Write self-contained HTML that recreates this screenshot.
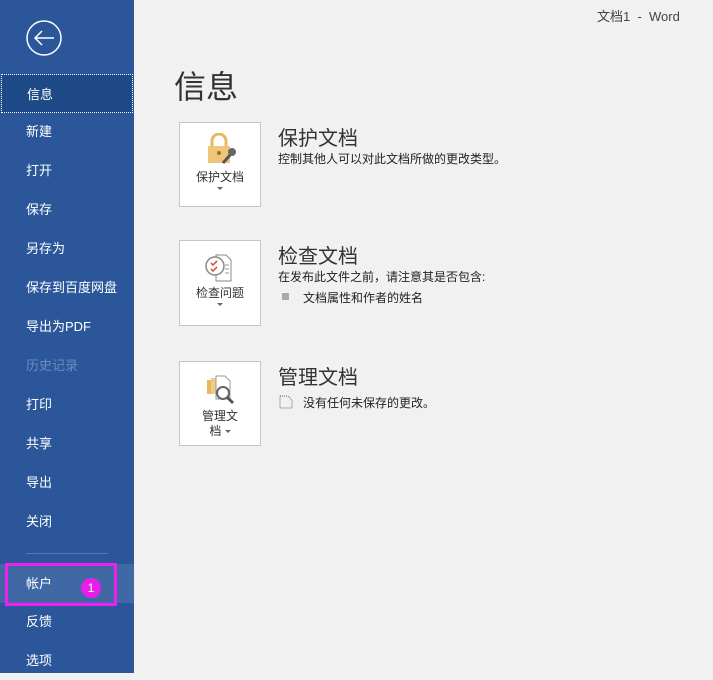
<!DOCTYPE html>
<html><head><meta charset="utf-8"><style>
*{margin:0;padding:0;box-sizing:border-box}
body{width:713px;height:673px;overflow:hidden;background:#f1f1f1;font-family:"Liberation Sans","Noto Sans CJK SC",sans-serif;position:relative}
#side{position:absolute;left:0;top:0;width:134px;height:673px;background:#2b579a}
.mi{position:absolute;left:0;width:134px;height:39px;line-height:39px;padding-left:26px;color:#fff;font-size:13px}
.sel{background:#1d4a86;border:1px dotted #fff;left:1px;width:132px;padding-left:25px}
.dis{color:#6d8cbd}
.btn{position:absolute;left:179px;width:82px;background:#fff;border:1px solid #c6c6c6;text-align:center;font-size:12px;color:#333}
.h{position:absolute;left:278px;font-size:20px;color:#333}
.d{position:absolute;left:278px;font-size:12px;color:#222}
.ar{display:block;width:0;height:0;margin:2px auto;border-left:3px solid transparent;border-right:3px solid transparent;border-top:3px solid #666}
</style></head><body>
<div id="side">
<svg style="position:absolute;left:26px;top:20px" width="36" height="36" viewBox="0 0 36 36"><circle cx="18" cy="18" r="17" fill="none" stroke="#fff" stroke-width="1.5"/><path d="M9 18H28M16 11L9 18L16 25" fill="none" stroke="#fff" stroke-width="1.5"/></svg>
<div class="mi sel" style="top:74px">信息</div>
<div class="mi" style="top:112px">新建</div>
<div class="mi" style="top:151px">打开</div>
<div class="mi" style="top:190px">保存</div>
<div class="mi" style="top:229px">另存为</div>
<div class="mi" style="top:268px">保存到百度网盘</div>
<div class="mi" style="top:307px">导出为PDF</div>
<div class="mi dis" style="top:346px">历史记录</div>
<div class="mi" style="top:385px">打印</div>
<div class="mi" style="top:424px">共享</div>
<div class="mi" style="top:463px">导出</div>
<div class="mi" style="top:502px">关闭</div>
<div style="position:absolute;left:26px;top:553px;width:82px;height:1px;background:#5577aa"></div>
<div class="mi" style="top:564px;background:#3f68a5">帐户</div>
<div style="position:absolute;left:5px;top:563px;width:112px;height:43px;border:3px solid #f01ef0"></div>
<div style="position:absolute;left:81px;top:578px;width:20px;height:20px;border-radius:50%;background:#e91ee9;color:#fff;font-size:12px;text-align:center;line-height:20px">1</div>
<div class="mi" style="top:602px">反馈</div>
<div class="mi" style="top:641px">选项</div>
</div>
<div style="position:absolute;left:597px;top:6px;font-size:13px;color:#444">文档1 &nbsp;-&nbsp; Word</div>
<div style="position:absolute;left:174px;top:62px;font-size:32px;color:#333">信息</div>

<div class="btn" style="top:122px;height:85px">
<svg style="margin-top:10px" width="34" height="32" viewBox="0 0 34 32"><path d="M9 13V8a7 7 0 0 1 14 0v5" fill="none" stroke="#e8b860" stroke-width="3"/><rect x="5" y="13" width="22" height="17" fill="#efc57a"/><circle cx="16" cy="20" r="2" fill="#a07030"/><path d="M20 30l8-9" stroke="#555" stroke-width="3"/><circle cx="29" cy="19" r="4" fill="#666"/></svg>
<div style="margin-top:0">保护文档</div><span class="ar"></span></div>
<div class="h" style="top:122px">保护文档</div>
<div class="d" style="top:150px">控制其他人可以对此文档所做的更改类型。</div>

<div class="btn" style="top:240px;height:86px">
<svg style="margin-top:12px" width="32" height="30" viewBox="0 0 32 30"><path d="M12 2h10l5 5v21H12z" fill="#fff" stroke="#888"/><circle cx="11" cy="13" r="9" fill="#fff" stroke="#888" stroke-width="1.5"/><path d="M7 10l2 2 4-4M7 16l2 2 4-4" stroke="#d9452b" stroke-width="1.5" fill="none"/><path d="M21 12h4M21 16h4M21 20h4" stroke="#999"/></svg>
<div style="margin-top:-2px">检查问题</div><span class="ar"></span></div>
<div class="h" style="top:240px">检查文档</div>
<div class="d" style="top:268px">在发布此文件之前，请注意其是否包含:</div>
<div style="position:absolute;left:282px;top:293px;width:7px;height:7px;background:#aaa"></div>
<div class="d" style="left:303px;top:289px">文档属性和作者的姓名</div>

<div class="btn" style="top:361px;height:85px">
<svg style="margin-top:12px" width="32" height="32" viewBox="0 0 32 32"><rect x="3" y="6" width="10" height="14" fill="#e8b860"/><rect x="7" y="4" width="10" height="16" fill="#f0cb85"/><path d="M12 2h9l5 5v18H12z" fill="#fff" stroke="#999"/><circle cx="19" cy="19" r="6" fill="#fff" stroke="#666" stroke-width="2"/><path d="M23 23l6 6" stroke="#555" stroke-width="3"/></svg>
<div style="line-height:15px">管理文<br>档 <span style="display:inline-block;border-left:3px solid transparent;border-right:3px solid transparent;border-top:3px solid #666;vertical-align:middle"></span></div></div>
<div class="h" style="top:361px">管理文档</div>
<svg style="position:absolute;left:279px;top:395px" width="14" height="14" viewBox="0 0 14 14"><path d="M1 1h8l4 4v8H1z" fill="none" stroke="#666" stroke-dasharray="1 1"/></svg>
<div class="d" style="left:303px;top:394px">没有任何未保存的更改。</div>
</body></html>
